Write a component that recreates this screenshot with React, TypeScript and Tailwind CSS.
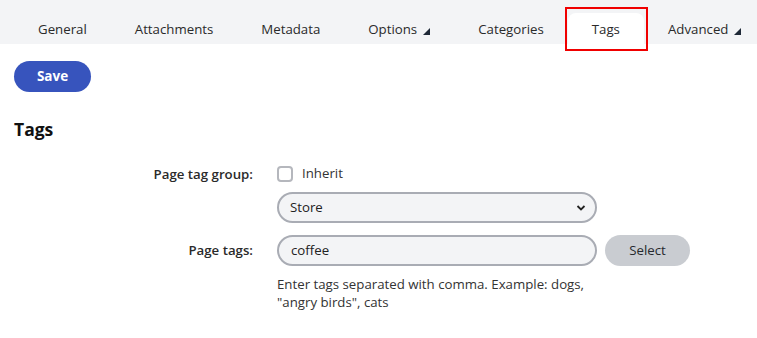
import React from "react";

const font = { fontFamily: '"Open Sans", "Noto Sans", sans-serif' };

function Tri() {
  return (
    <svg width="7" height="7" viewBox="0 0 7 7" className="ml-[6px] mt-[4px]">
      <polygon points="0,7 7,7 7,0" fill="#1f2937" />
    </svg>
  );
}

export default function App() {
  const tabs = [
    { label: "General" },
    { label: "Attachments" },
    { label: "Metadata" },
    { label: "Options", tri: true },
    { label: "Categories" },
    { label: "Tags", active: true },
    { label: "Advanced", tri: true },
  ];
  return (
    <div className="relative w-[757px] h-[338px] bg-white text-[#222] overflow-hidden" style={font}>
      <div className="flex h-[44px] bg-[#f3f4f6] pt-[13px] pl-[14px]">
        {tabs.map((t) => (
          <div
            key={t.label}
            className={
              "relative flex items-center h-[31px] px-6 pt-[2px] text-[13.25px] text-[#2a2a2a] " +
              (t.active ? "bg-white rounded-t-lg" : "")
            }
          >
            {t.label}
            {t.tri && <Tri />}
            {t.active && (
              <div className="absolute left-[-3px] right-[-4px] top-[-6px] bottom-[-7px] border-2 border-[#f00000]" />
            )}
          </div>
        ))}
      </div>

      <div className="px-[14px]">
        <button className="mt-[17px] h-[31px] w-[77px] rounded-full bg-[#3754bd] text-white text-[13.5px] font-bold">
          Save
        </button>
        <h2 className="mt-[25px] text-[17.5px] font-bold leading-[24px] text-[#111]">Tags</h2>

        <div className="mt-[23px] grid grid-cols-[239px_auto] gap-x-6 items-center text-[13.25px]">
          <div className="text-right font-semibold text-[#2a2a2a] leading-[20px]">Page tag group:</div>
          <label className="flex items-center gap-[9px] h-[20px]">
            <span className="w-[16px] h-[16px] rounded-[4px] border-2 border-[#b5b7bd] bg-white" />
            <span className="text-[#333]">Inherit</span>
          </label>

          <div />
          <div className="mt-[8px] flex items-center justify-between w-[320px] h-[31px] rounded-full border-2 border-[#a9acb4] bg-[#f3f4f6] pl-[11px] pr-[9px]">
            <span className="text-[#222]">Store</span>
            <svg width="10" height="6" viewBox="0 0 10 6">
              <path d="M1.5 1 L5 4.5 L8.5 1" fill="none" stroke="#222" strokeWidth="1.8" />
            </svg>
          </div>

          <div className="mt-[12px] text-right font-semibold text-[#2a2a2a]">Page tags:</div>
          <div className="mt-[12px] flex items-center gap-2">
            <div className="flex items-center w-[320px] h-[31px] rounded-full border-2 border-[#a9acb4] bg-[#f3f4f6] pl-[12px]">
              <span className="text-[#222]">coffee</span>
            </div>
            <button className="h-[31px] w-[85px] rounded-full bg-[#c9ccd1] text-[#26292d] font-medium">
              Select
            </button>
          </div>

          <div />
          <div className="mt-[9px] w-[320px] leading-[18px] text-[#333]">
            Enter tags separated with comma. Example: dogs, "angry birds", cats
          </div>
        </div>
      </div>
    </div>
  );
}
